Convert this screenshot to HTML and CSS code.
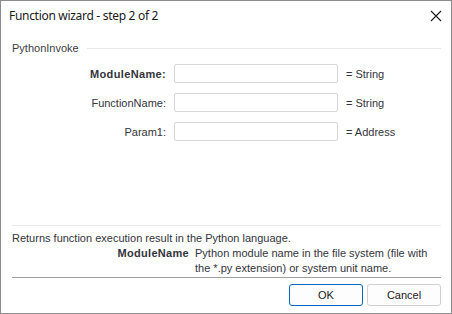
FILE: index.html
```html
<!DOCTYPE html>
<html>
<head>
<meta charset="utf-8">
<link rel="stylesheet" href="styles.css">
</head>
<body>
<div class="window">
  <div class="titlebar">
    <span class="title">Function wizard - step 2 of 2</span>
    <svg class="close" width="12" height="12" viewBox="0 0 12 12"><path d="M1 1 L11 11 M11 1 L1 11" stroke="#1a1a1a" stroke-width="1.1" fill="none"/></svg>
  </div>
  <div class="content">
    <div class="group-head">
      <span class="group-label">PythonInvoke</span>
      <span class="group-line"></span>
    </div>
    <div class="form">
      <label class="lbl bold">ModuleName:</label>
      <div class="input"></div>
      <span class="type">= String</span>
      <label class="lbl">FunctionName:</label>
      <div class="input"></div>
      <span class="type">= String</span>
      <label class="lbl">Param1:</label>
      <div class="input"></div>
      <span class="type">= Address</span>
    </div>
  </div>
  <div class="help">
    <p class="summary">Returns function execution result in the Python language.</p>
    <div class="param">
      <span class="pname">ModuleName</span>
      <span class="pdesc">Python module name in the file system (file with the *.py extension) or system unit name.</span>
    </div>
  </div>
  <div class="footer">
    <button class="btn default">OK</button>
    <button class="btn">Cancel</button>
  </div>
</div>
</body>
</html>
```
FILE: styles.css
```css
* { box-sizing: border-box; }
html, body { margin: 0; padding: 0; }
body {
  width: 452px;
  height: 314px;
  font-family: "Liberation Sans", Arial, sans-serif;
  font-size: 11px;
  color: #33343c;
  background: #fff;
}
.window {
  width: 452px;
  height: 314px;
  border: 1px solid #8c8c8c;
  background: #fff;
  display: flex;
  flex-direction: column;
}
.titlebar {
  height: 29px;
  display: flex;
  align-items: center;
  justify-content: space-between;
  padding: 0 9px 0 8px;
}
.title {
  color: #1a1a1a;
  font-family: "Noto Sans", "Open Sans", sans-serif;
  font-size: 12px;
  letter-spacing: -0.3px;
}
.close { display: block; }
.content {
  flex: 1;
  padding: 8px 10px 0 11px;
}
.group-head {
  display: flex;
  align-items: center;
  gap: 8px;
  height: 20px;
}
.group-label { color: #3c3d45; }
.group-line {
  flex: 1;
  height: 1px;
  background: #e6e6e6;
}
.form {
  margin-top: 6px;
  display: grid;
  grid-template-columns: 154px 164px auto;
  column-gap: 8px;
  row-gap: 10px;
  align-items: center;
}
.lbl { text-align: right; }
.bold { font-weight: bold; letter-spacing: 0.35px; }
.input {
  height: 19px;
  border: 1px solid #d6d6d6;
  border-radius: 2px;
  background: #fff;
}
.help {
  margin: 0 10px 0 11px;
  border-top: 1px solid #ebebeb;
  padding-top: 5px;
  padding-bottom: 1px;
  border-bottom: 1px solid #a0a0a0;
}
.summary { margin: 0; line-height: 15px; }
.param {
  display: grid;
  grid-template-columns: 177px 1fr;
  column-gap: 6px;
  line-height: 15px;
}
.pname { font-weight: bold; letter-spacing: 0.3px; white-space: nowrap; text-align: right; }
.pdesc { padding-right: 4px; }
.footer {
  height: 35px;
  display: flex;
  justify-content: flex-end;
  gap: 4px;
  padding: 6px 10px 0 0;
}
.btn {
  width: 74px;
  height: 22px;
  font-family: inherit;
  font-size: 11px;
  color: #1a1a1a;
  background: #fdfdfd;
  border: 1px solid #d0d0d0;
  border-radius: 3px;
  padding: 0;
}
.btn.default { border-color: #0067c0; }
```
